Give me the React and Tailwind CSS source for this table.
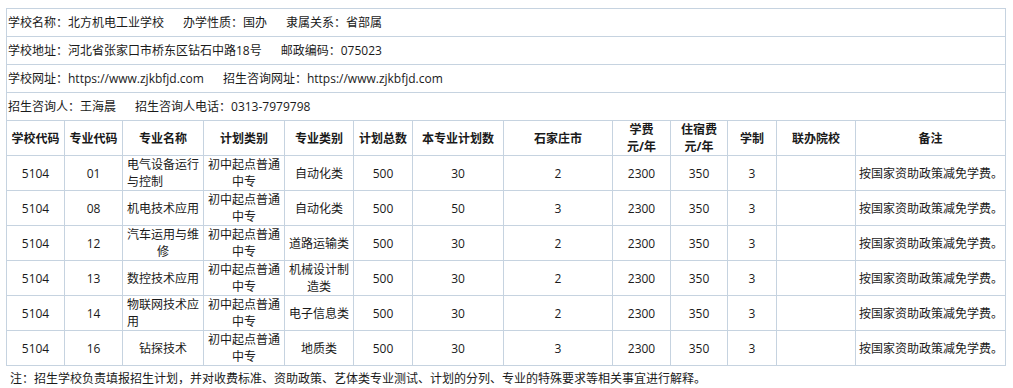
import React from 'react';

const cols = [58, 58, 81, 81, 69, 59, 91, 109, 58, 57, 49, 79, 150];

const heads = [
    '学校代码', '专业代码', '专业名称', '计划类别', '专业类别', '计划总数', '本专业计划数', '石家庄市',
    ['学费', '元/年'], ['住宿费', '元/年'], '学制', '联办院校', '备注',
];

const rows = [
    { code: '01', name: '电气设备运行与控制', nameAlign: 'text-left', type: '自动化类', plan: 30, sjz: 2 },
    { code: '08', name: '机电技术应用', nameAlign: 'text-center', type: '自动化类', plan: 50, sjz: 3 },
    { code: '12', name: '汽车运用与维修', nameAlign: 'text-center', type: '道路运输类', plan: 30, sjz: 2 },
    { code: '13', name: '数控技术应用', nameAlign: 'text-center', type: '机械设计制造类', plan: 30, sjz: 2 },
    { code: '14', name: '物联网技术应用', nameAlign: 'text-left', type: '电子信息类', plan: 30, sjz: 2 },
    { code: '16', name: '钻探技术', nameAlign: 'text-center', type: '地质类', plan: 30, sjz: 3 },
];

const cell = 'border border-[#c6d3e0] align-middle';

function Info({ children }) {
    return (
        <tr>
            <td colSpan={13} className={`${cell} h-[28px] pl-[1px] text-left`}>
                {children}
            </td>
        </tr>
    );
}

export default function App() {
    return (
        <div className="bg-white w-[1013px] h-[388px] pt-[8px] pl-[6px] text-[12px] leading-[17px] text-[#1a1a1a]"
            style={{ fontFamily: '"Open Sans", "Noto Sans CJK SC", sans-serif' }}>
            <table className="border-collapse table-fixed w-[999px]">
                <colgroup>
                    {cols.map((w, i) => <col key={i} style={{ width: w }} />)}
                </colgroup>
                <tbody>
                    <Info>
                        学校名称：北方机电工业学校<span className="ml-[19px]">办学性质：国办</span><span className="ml-[19px]">隶属关系：省部属</span>
                    </Info>
                    <Info>
                        学校地址：河北省张家口市桥东区钻石中路18号<span className="ml-[19px]">邮政编码：075023</span>
                    </Info>
                    <Info>
                        学校网址：https://www.zjkbfjd.com<span className="ml-[19px]">招生咨询网址：https://www.zjkbfjd.com</span>
                    </Info>
                    <Info>
                        招生咨询人：王海晨<span className="ml-[19px]">招生咨询人电话：0313-7979798</span>
                    </Info>
                    <tr>
                        {heads.map((h, i) => (
                            <td key={i} className={`${cell} h-[35px] font-bold text-center px-[3px]`}>
                                {Array.isArray(h) ? <>{h[0]}<br />{h[1]}</> : h}
                            </td>
                        ))}
                    </tr>
                    {rows.map((r) => (
                        <tr key={r.code}>
                            <td className={`${cell} h-[35px] text-center`}>5104</td>
                            <td className={`${cell} text-center`}>{r.code}</td>
                            <td className={`${cell} ${r.nameAlign} px-[4px]`}>{r.name}</td>
                            <td className={`${cell} text-center px-[4px]`}>初中起点普通中专</td>
                            <td className={`${cell} text-center px-[4px]`}>{r.type}</td>
                            <td className={`${cell} text-center`}>500</td>
                            <td className={`${cell} text-center`}>{r.plan}</td>
                            <td className={`${cell} text-center`}>{r.sjz}</td>
                            <td className={`${cell} text-center`}>2300</td>
                            <td className={`${cell} text-center`}>350</td>
                            <td className={`${cell} text-center`}>3</td>
                            <td className={cell}></td>
                            <td className={`${cell} text-left pl-[3px] whitespace-nowrap`}>按国家资助政策减免学费。</td>
                        </tr>
                    ))}
                </tbody>
            </table>
            <p className="mt-[4px] pl-[4px]">
                注：招生学校负责填报招生计划，并对收费标准、资助政策、艺体类专业测试、计划的分列、专业的特殊要求等相关事宜进行解释。
            </p>
        </div>
    );
}
